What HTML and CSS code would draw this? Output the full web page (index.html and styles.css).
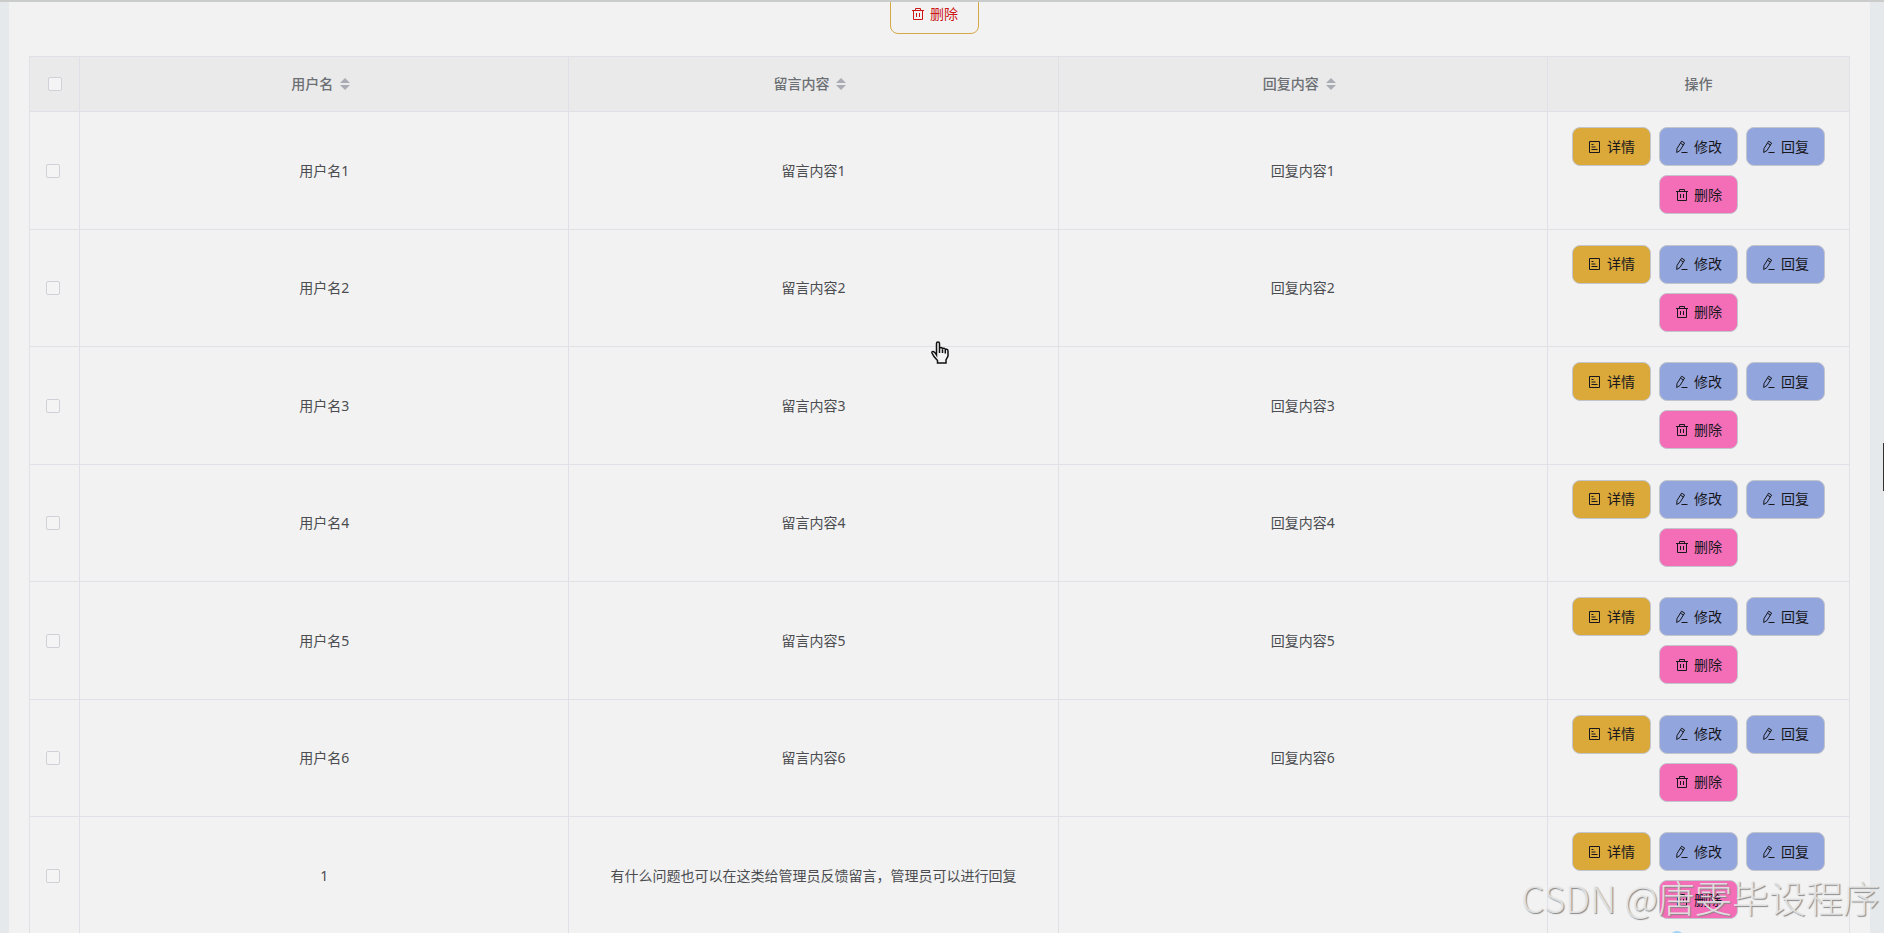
FILE: index.html
```html
<!DOCTYPE html>
<html lang="zh-CN">
<head>
    <meta charset="UTF-8">
    <meta name="viewport" content="width=device-width, initial-scale=1.0">
    <title>留言管理</title>
    <link rel="stylesheet" href="styles.css">
</head>
<body>
    <svg class="sprite" aria-hidden="true">
        <symbol id="icon-delete" viewBox="0 0 14 14">
            <path d="M1 3.5h12M4.5 3.5v-2h5v2M2.5 3.5v9h9v-9M5.5 6v4M8.5 6v4" />
        </symbol>
        <symbol id="icon-tickets" viewBox="0 0 14 14">
            <path d="M1.500 1.500h10v11h-10zM3.500 4.500h2M3.500 7h4M3.500 9.500h6" />
        </symbol>
        <symbol id="icon-edit" viewBox="0 0 14 14">
            <path d="M6.600 1.200l3 1.800-4.600 7.500-3.300 2 .3-4zM5.500 3.200l3 1.800M6.500 12.500h6" />
        </symbol>
    </svg>

    <div class="page">
        <main class="card">
            <div class="toolbar">
                <button type="button" class="btn-batch"><svg class="icon"><use href="#icon-delete" /></svg>删除</button>
            </div>

            <table class="table">
                <colgroup>
                    <col class="col-check">
                    <col>
                    <col>
                    <col>
                    <col class="col-actions">
                </colgroup>
                <thead>
                    <tr>
                        <th class="check"><input type="checkbox" aria-label="全选"></th>
                        <th><div class="sortable">用户名<span class="caret"></span></div></th>
                        <th><div class="sortable">留言内容<span class="caret"></span></div></th>
                        <th><div class="sortable">回复内容<span class="caret"></span></div></th>
                        <th>操作</th>
                    </tr>
                </thead>
                <tbody id="rows"></tbody>
            </table>
        </main>
        <span class="scroll-thumb"></span>
        <span class="float-dot"></span>
        <svg class="pointer" viewBox="0 0 18 23" aria-hidden="true">
            <path d="M5.5 14V2.5Q5.5 1 7 1t1.500 1.500V8Q8.500 6.500 10 6.500T11.500 8.500Q11.500 7 13 7.200T14.300 9Q14.500 8 15.700 8.300T17 10V15L15 19V22H6.500V19.500L3 15.500 1 12Q.5 10.500 2 10.500 3.500 10.500 5.500 14z" />
            <path d="M8.500 8v4M11.500 8.500V12M14.300 9v3.500" />
        </svg>
        <div class="watermark">CSDN @唐雯毕设程序</div>
    </div>

    <script>
        const messages = [
            { user: '用户名1', content: '留言内容1', reply: '回复内容1' },
            { user: '用户名2', content: '留言内容2', reply: '回复内容2' },
            { user: '用户名3', content: '留言内容3', reply: '回复内容3' },
            { user: '用户名4', content: '留言内容4', reply: '回复内容4' },
            { user: '用户名5', content: '留言内容5', reply: '回复内容5' },
            { user: '用户名6', content: '留言内容6', reply: '回复内容6' },
            { user: '1', content: '有什么问题也可以在这类给管理员反馈留言，管理员可以进行回复', reply: '' }
        ];

        function button(type, icon, text) {
            return `<button type="button" class="btn btn-${type}"><svg class="icon"><use href="#icon-${icon}" /></svg>${text}</button>`;
        }

        document.getElementById('rows').innerHTML = messages.map(item => `
            <tr>
                <td class="check"><input type="checkbox" aria-label="选择${item.user}"></td>
                <td>${item.user}</td>
                <td>${item.content}</td>
                <td>${item.reply}</td>
                <td>
                    <div class="actions">
                        ${button('detail', 'tickets', '详情')}
                        ${button('edit', 'edit', '修改')}
                        ${button('edit', 'edit', '回复')}
                        ${button('delete', 'delete', '删除')}
                    </div>
                </td>
            </tr>`).join('');
    </script>
</body>
</html>
```

FILE: styles.css
```css
* {
    box-sizing: border-box;
}

body {
    margin: 0;
    font-family: "Noto Sans", "Noto Sans CJK SC", sans-serif;
    font-size: 14px;
    line-height: 20px;
    color: #4b4d51;
    background-color: #e5e9ec;
}

.sprite {
    position: absolute;
    width: 0;
    height: 0;
}

.page {
    position: relative;
    height: 100vh;
    padding: 0 14px 0 9px;
    overflow: hidden;
    border-top: 2px solid #c9cccb;
}

.card {
    padding: 0 20px;
    background-color: #f2f2f2;
}

.toolbar {
    display: flex;
    align-items: flex-end;
    justify-content: center;
    height: 32px;
    margin-bottom: 22px;
    padding-right: 10px;
    overflow: hidden;
}

button {
    display: flex;
    flex-shrink: 0;
    align-items: center;
    justify-content: center;
    gap: 5px;
    padding: 0;
    font: inherit;
    border-radius: 8px;
    cursor: pointer;
}

.btn-batch {
    width: 89px;
    height: 40px;
    color: #cc1515;
    background-color: #f2f2f2;
    border: 1px solid #d6a845;
}

.icon {
    width: 14px;
    height: 14px;
    fill: none;
    stroke: currentColor;
    stroke-width: 1;
}

.table {
    width: 100%;
    table-layout: fixed;
    border-collapse: separate;
    border-spacing: 0;
    border-top: 1px solid #dfe1e6;
    border-left: 1px solid #dfe1e6;
}

.col-check {
    width: 50px;
}

.col-actions {
    width: 302px;
}

th, td {
    padding: 0;
    text-align: center;
    border-right: 1px solid #dfe1e6;
    border-bottom: 1px solid #dfe1e6;
}

th {
    height: 55px;
    font-weight: 500;
    color: #6c6f74;
    background-color: #eaeaea;
}

td {
    height: 118px;
}

tr:nth-child(even) td {
    height: 117px;
}

.check {
    text-align: left;
    padding-left: 16px;
}

th.check {
    padding-left: 18px;
}

input[type="checkbox"] {
    display: block;
    width: 14px;
    height: 14px;
    margin: 0;
    appearance: none;
    background-color: #f4f4f4;
    border: 1px solid #cfd1d6;
    border-radius: 2px;
}

.sortable {
    display: flex;
    align-items: center;
    justify-content: center;
}

/* up and down sort arrows */
.caret {
    display: flex;
    flex-direction: column;
    align-items: center;
    gap: 2px;
    width: 24px;
}

.caret::before, .caret::after {
    content: "";
    border: 5px solid transparent;
}

.caret::before {
    border-top: 0;
    border-bottom-color: #a9acb2;
}

.caret::after {
    border-bottom: 0;
    border-top-color: #a9acb2;
}

.actions {
    display: flex;
    flex-wrap: wrap;
    justify-content: center;
    gap: 9px 8px;
    padding: 0 20px;
}

.btn {
    width: 79px;
    height: 39px;
    color: #17171c;
    border: 1px solid #c3c5cc;
}

.btn-detail {
    background-color: #daa93a;
}

.btn-edit {
    background-color: #92a5dc;
}

.btn-delete {
    background-color: #f36db7;
}

.scroll-thumb {
    position: absolute;
    top: 441px;
    right: 0;
    width: 1px;
    height: 48px;
    background-color: #35302e;
}

.float-dot {
    position: absolute;
    right: 200px;
    bottom: -12px;
    width: 14px;
    height: 14px;
    border-radius: 50%;
    background-color: #9fd3f7;
}

.pointer {
    position: absolute;
    top: 339px;
    left: 931px;
    width: 18px;
    height: 23px;
    fill: #f4f4f4;
    stroke: #111;
    stroke-width: 1.5;
}

.watermark {
    position: absolute;
    right: 4px;
    bottom: 12px;
    font-family: "Noto Sans CJK SC", sans-serif;
    font-size: 37px;
    font-weight: 300;
    line-height: 48px;
    color: rgba(232, 232, 232, 0.9);
    text-shadow: 1px 1px 1px #888;
    white-space: nowrap;
    pointer-events: none;
}
```
